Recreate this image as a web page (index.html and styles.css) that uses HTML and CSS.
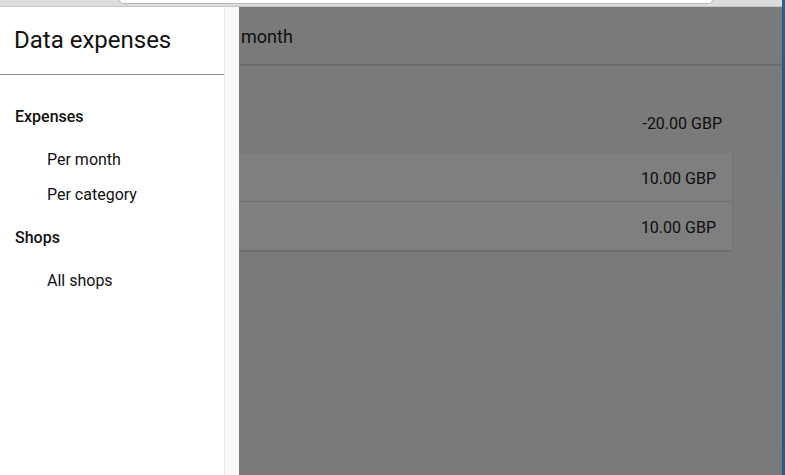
FILE: index.html
```html
<!DOCTYPE html>
<html lang="en">
<head>
<meta charset="utf-8">
<title>Data expenses</title>
<link rel="stylesheet" href="styles.css">
</head>
<body>
<div class="screen">
  <div class="window">
    <div class="chrome"><div class="address"></div></div>
    <div class="viewport">
      <div class="app">
        <header class="app-header">
          <h1 class="app-title">month</h1>
        </header>
        <main class="content">
          <div class="summary-row">-20.00 GBP</div>
          <div class="card">
            <div class="card-row">10.00 GBP</div>
            <div class="card-row">10.00 GBP</div>
          </div>
        </main>
      </div>
      <div class="backdrop"></div>
      <aside class="drawer">
        <div class="drawer-panel">
          <div class="drawer-header">Data expenses</div>
          <nav class="drawer-nav">
            <div class="nav-group">
              <div class="nav-label">Expenses</div>
              <div class="nav-item">Per month</div>
              <div class="nav-item">Per category</div>
            </div>
            <div class="nav-group">
              <div class="nav-label">Shops</div>
              <div class="nav-item">All shops</div>
            </div>
          </nav>
        </div>
        <div class="drawer-scrolltrack"></div>
      </aside>
    </div>
  </div>
  <div class="desktop-edge"></div>
</div>
</body>
</html>
```

FILE: styles.css
```css
html, body {
  margin: 0;
  padding: 0;
  height: 100%;
}

body {
  font-family: Roboto, "Liberation Sans", sans-serif;
  color: #212121;
  overflow: hidden;
}

.screen {
  display: flex;
  width: 785px;
  height: 475px;
}

.window {
  flex: 1;
  display: flex;
  flex-direction: column;
  min-width: 0;
}

.desktop-edge {
  width: 3px;
  background: linear-gradient(180deg, #2d6088 0%, #255478 50%, #2b5d84 100%);
}

.chrome {
  height: 6px;
  background: #dcdcdc;
  border-bottom: 1px solid #c4c4c4;
  position: relative;
  overflow: hidden;
}

.address {
  position: absolute;
  left: 119px;
  top: -6px;
  width: 592px;
  height: 8px;
  background: #ffffff;
  border: 1px solid #b9b9b9;
  border-radius: 0 0 4px 4px;
}

.viewport {
  flex: 1;
  position: relative;
  overflow: hidden;
  background: #f5f5f5;
}

.app {
  display: flex;
  flex-direction: column;
  height: 100%;
}

.app-header {
  height: 57px;
  border-bottom: 1px solid #d2d2d2;
  box-shadow: 0 1px 2px rgba(0, 0, 0, 0.08);
  display: flex;
  align-items: flex-start;
  padding-left: 241px;
  background: #f5f5f5;
}

.app-title {
  margin: 0;
  font-size: 18px;
  font-weight: 400;
  line-height: 21px;
  padding-top: 19px;
}

.content {
  padding: 35px 50px 0 20px;
  display: flex;
  flex-direction: column;
}

.summary-row {
  height: 48px;
  line-height: 48px;
  font-size: 16px;
  text-align: right;
  padding-right: 10px;
}

.card {
  margin-top: 5px;
  background: #ffffff;
  box-shadow: 0 1px 2px rgba(0, 0, 0, 0.18);
}

.card-row {
  height: 45px;
  padding-top: 3px;
  line-height: 45px;
  font-size: 16px;
  text-align: right;
  padding-right: 16px;
}

.card-row + .card-row {
  border-top: 1px solid #dcdcdc;
}

.backdrop {
  position: absolute;
  inset: 0;
  background: rgba(0, 0, 0, 0.5);
}

.drawer {
  position: absolute;
  left: 0;
  top: 0;
  bottom: 0;
  display: flex;
  background: #ffffff;
}

.drawer-panel {
  width: 224px;
  display: flex;
  flex-direction: column;
}

.drawer-scrolltrack {
  width: 14px;
  border-left: 1px solid #e6e6e6;
  background: #f9f9f9;
}

.drawer-header {
  height: 48px;
  padding: 19px 0 0 14px;
  font-size: 24px;
  line-height: 28px;
  font-weight: 400;
  color: #111111;
  border-bottom: 1px solid #8e8e8e;
}

.drawer-nav {
  padding-top: 24px;
  display: flex;
  flex-direction: column;
}

.nav-group {
  margin-bottom: 8px;
}

.nav-label {
  padding-left: 15px;
  font-size: 16px;
  font-weight: 500;
  line-height: 35px;
  margin-bottom: 8px;
  color: #111111;
}

.nav-item {
  padding-left: 47px;
  font-size: 16px;
  line-height: 35px;
  color: #111111;
}
```
